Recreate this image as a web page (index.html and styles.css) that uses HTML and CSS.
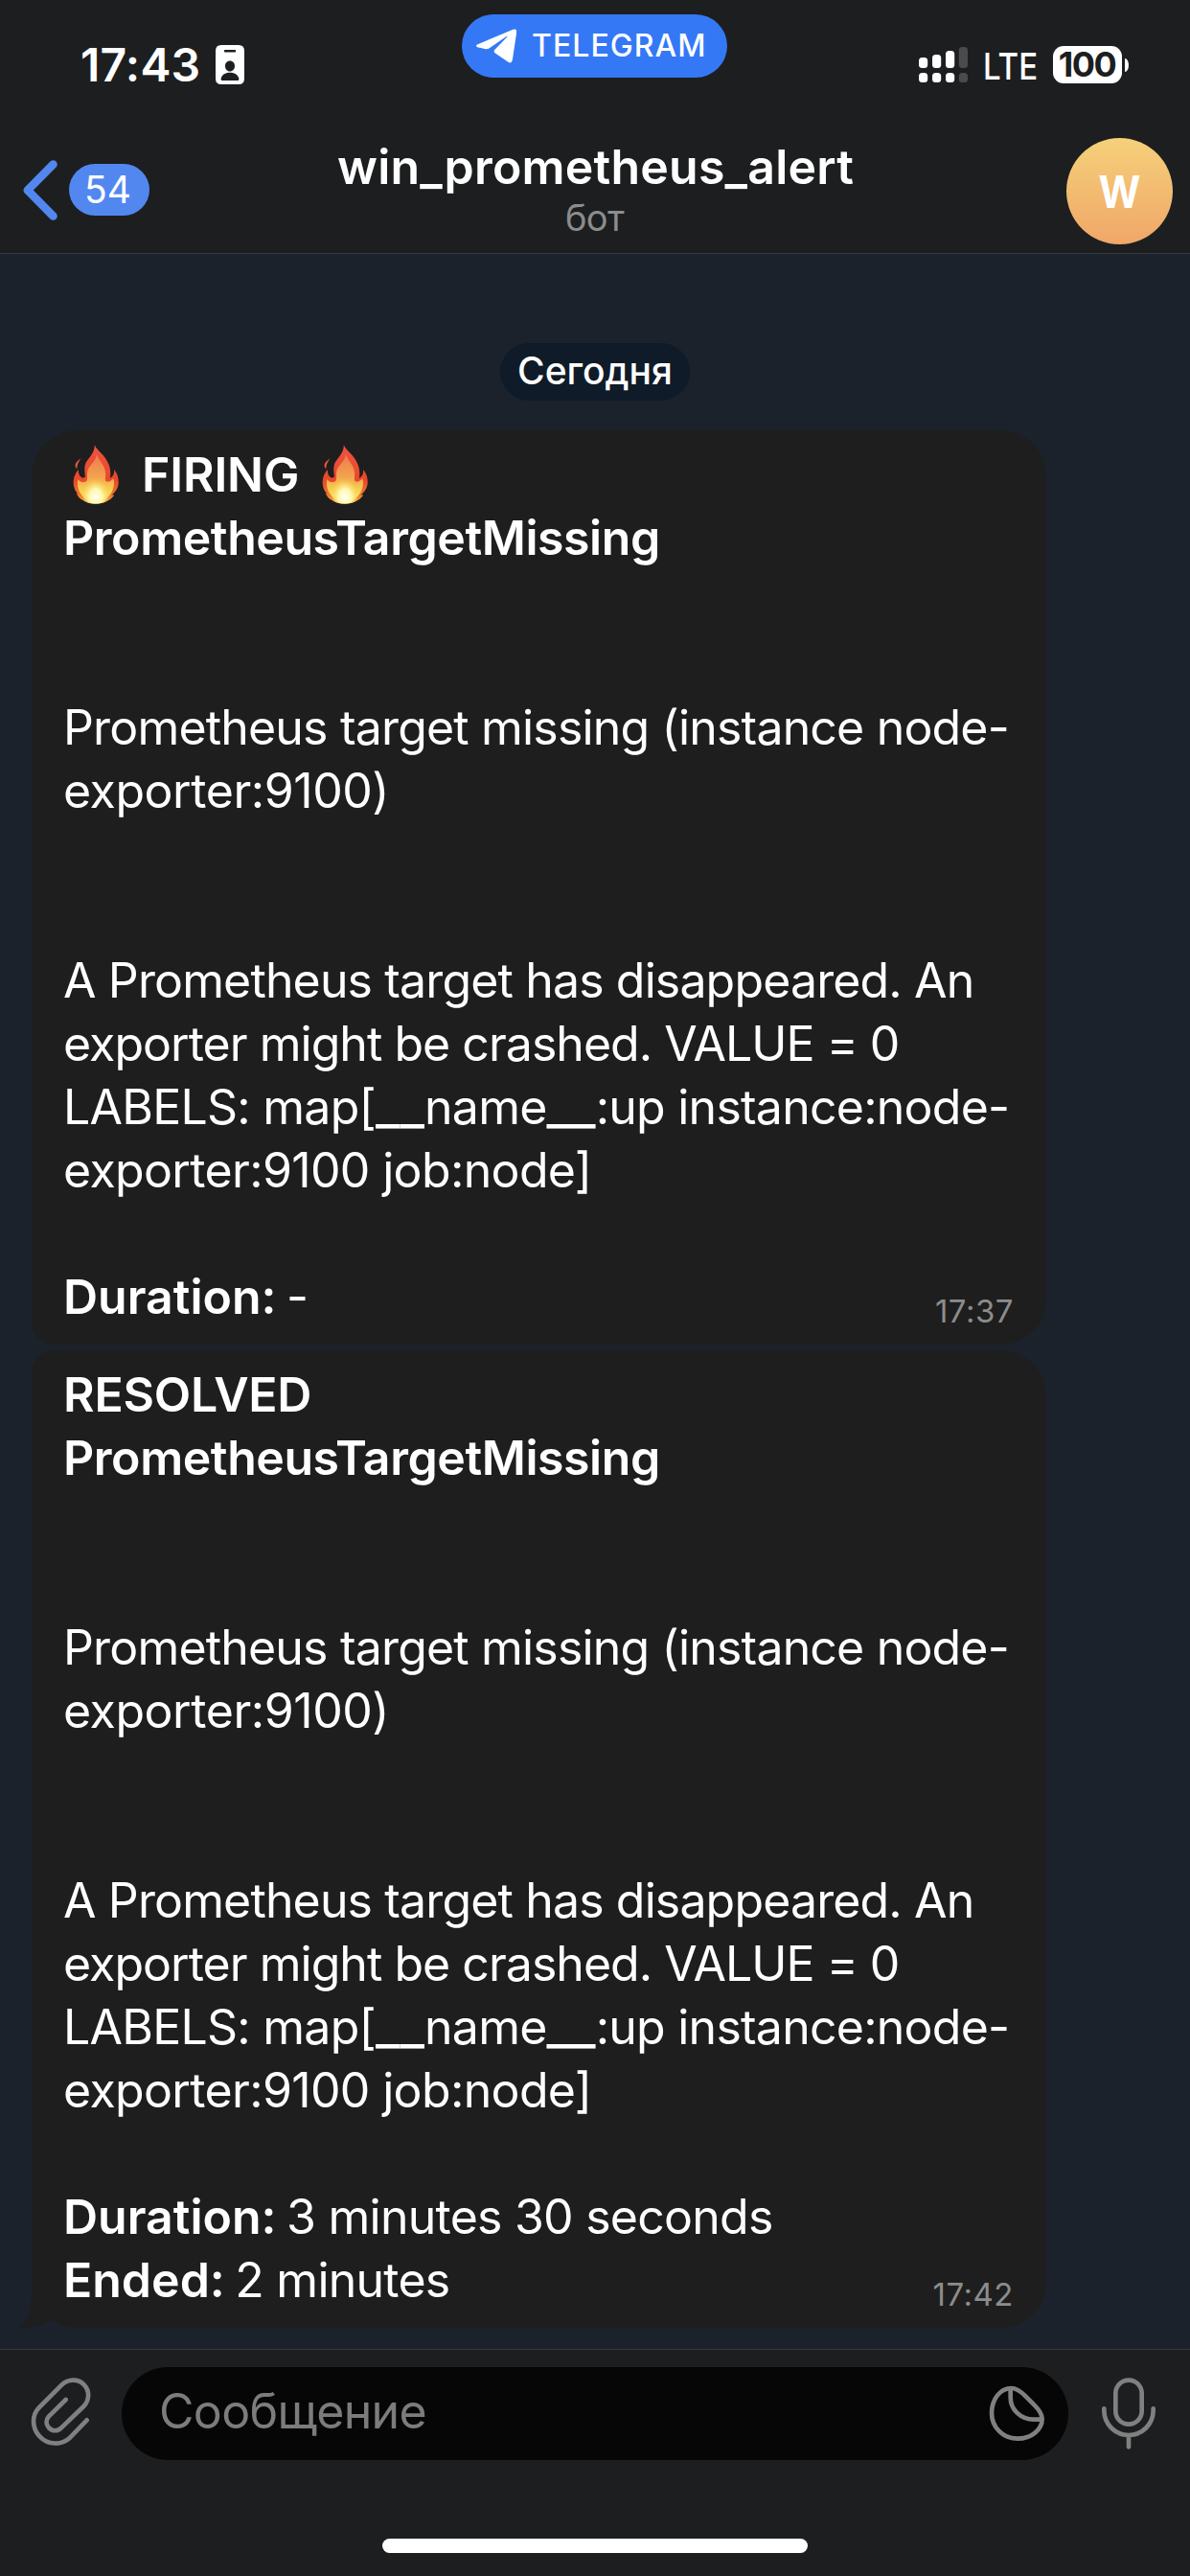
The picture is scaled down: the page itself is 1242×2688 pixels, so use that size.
FILE: index.html
```html
<!DOCTYPE html>
<html lang="ru">
<head>
<meta charset="utf-8">
<title>win_prometheus_alert</title>
<link rel="stylesheet" href="styles.css">
</head>
<body>
<svg class="defs" width="0" height="0" aria-hidden="true">
  <defs>
    <linearGradient id="flame-outer" x1="0" y1="0" x2="0" y2="1">
      <stop offset="0" stop-color="#ee5340"/>
      <stop offset=".6" stop-color="#e9472a"/>
      <stop offset=".85" stop-color="#f0762c"/>
      <stop offset="1" stop-color="#f6b440"/>
    </linearGradient>
    <linearGradient id="flame-inner" x1="0" y1="0" x2="0" y2="1">
      <stop offset="0" stop-color="#ee7a50"/>
      <stop offset=".45" stop-color="#f2a04e"/>
      <stop offset=".75" stop-color="#f8cf52"/>
      <stop offset="1" stop-color="#fbe46a"/>
    </linearGradient>
    <radialGradient id="flame-core" cx=".5" cy=".68" r=".5">
      <stop offset="0" stop-color="#fffff0"/>
      <stop offset=".45" stop-color="#fff9b4"/>
      <stop offset="1" stop-color="#fbdc5a" stop-opacity="0"/>
    </radialGradient>
    <symbol id="flame" viewBox="49 42 145 186">
      <path fill="url(#flame-outer)" d="M118 42C124 60 152 72 164 108C168 122 169 134 166 147C175 143 181 134 179 120C190 132 194 148 193 164C192 178 184 190 172 200L179 199C177 208 160 219 146 224C130 229 110 229 96 224C80 218 66 210 60 194L67 198C55 188 50 172 51 156C52 142 58 130 67 120C66 134 70 142 80 146L88 143C88 132 84 120 88 104C93 86 118 72 118 42Z"/>
      <path fill="#ea5540" d="M74 83C72 92 62 100 62 118C56 114 55 106 59 99C63 93 70 90 74 83Z"/>
      <path fill="url(#flame-inner)" d="M124 70C130 92 150 104 152 130C153 146 148 156 156 158C164 160 172 154 177 148C184 172 172 196 158 208C142 228 100 228 84 208C70 194 60 176 65 150C70 158 80 162 90 158C98 152 92 138 96 122C100 106 124 94 124 70Z"/>
      <ellipse cx="121" cy="186" rx="44" ry="56" fill="url(#flame-core)" clip-path="url(#flame-clip)"/>
    </symbol>
    <clipPath id="flame-clip"><path d="M70 120H172V206C160 219 146 227 121 228C96 227 80 218 70 206Z"/></clipPath>
  </defs>
</svg>

<div class="screen">
  <header class="header">
    <div class="status">
      <div class="status-time">17:43</div>
      <svg class="status-id" viewBox="0 0 30 41">
        <path fill="#fff" fill-rule="evenodd" d="M6 0H24Q30 0 30 6V35Q30 41 24 41H6Q0 41 0 35V6Q0 0 6 0ZM10 5Q8.800 5 8.800 6.200Q8.800 7.500 10 7.500H20Q21.200 7.500 21.200 6.200Q21.200 5 20 5ZM15 16.500C12 16.500 10 18.800 10 22C10 25 12.200 27.500 15 27.500C17.800 27.500 20 25 20 22C20 18.800 18 16.500 15 16.500ZM15 28.800C10 28.800 6 31.500 5.600 35.500Q5.600 37 7 37H23Q24.400 37 24.400 35.500C24 31.500 20 28.800 15 28.800Z"/>
      </svg>
      <div class="app-pill">
        <svg class="plane" viewBox="0 0 42 36">
          <path fill="#fff" d="M1 16.500L38.500 .8Q42.600 -.5 42.200 3.600L37.800 32.800Q36.800 37 33 34.400L19.500 25.200Q17.800 23.800 19.200 22L32.600 8.300Q32.500 7.600 31.600 8L13.800 20.200Q11.500 21.600 9 21L1.200 19.200Q-1 18 1 16.500Z"/>
        </svg>
        <span>TELEGRAM</span>
      </div>
      <svg class="signal" viewBox="0 0 51 37">
        <g fill="#fff">
          <rect x="0" y="11" width="9.200" height="11" rx="3.500"/><rect x="14" y="8" width="9.200" height="14" rx="3.500"/><rect x="28" y="4" width="9.200" height="18" rx="3.500"/>
          <rect x="0" y="27" width="9.200" height="10" rx="3.500"/><rect x="14" y="27" width="9.200" height="10" rx="3.500"/><rect x="28" y="27" width="9.200" height="10" rx="3.500"/>
        </g>
        <g fill="#4b4b4d"><rect x="41.800" y="0" width="9.200" height="22" rx="3.500"/><rect x="41.800" y="27" width="9.200" height="10" rx="3.500"/></g>
      </svg>
      <div class="network"><span>LTE</span></div>
      <div class="battery">100</div>
      <div class="battery-cap"></div>
    </div>
    <nav class="nav">
      <div class="back">
        <svg class="chevron" viewBox="0 0 36 63"><path d="M31.500 4.500L4.800 31.500L31.500 58.500" fill="none" stroke="#5287ef" stroke-width="8.600" stroke-linecap="round" stroke-linejoin="round"/></svg>
        <span class="unread">54</span>
      </div>
      <div class="heading">
        <div class="title">win_prometheus_alert</div>
        <div class="subtitle">бот</div>
      </div>
      <div class="avatar"><span>W</span></div>
    </nav>
  </header>

  <main class="chat">
    <div class="date">Сегодня</div>

    <article class="bubble first">
      <div class="line firing"><svg class="flame"><use href="#flame"/></svg><b>FIRING</b><svg class="flame"><use href="#flame"/></svg></div>
      <div class="line"><b class="name">PrometheusTargetMissing</b></div>
      <div class="line"></div>
      <div class="line"></div>
      <div class="line t80">Prometheus target missing (instance node-</div>
      <div class="line t45">exporter:9100)</div>
      <div class="line"></div>
      <div class="line"></div>
      <div class="line t85">A Prometheus target has disappeared. An</div>
      <div class="line t95">exporter might be crashed. VALUE = 0</div>
      <div class="line t75">LABELS: map[<span class="rule">__</span>name<span class="rule">__</span>:up instance:node-</div>
      <div class="line t65">exporter:9100 job:node]</div>
      <div class="line"></div>
      <div class="line last"><b>Duration:</b><span class="value">-</span><time>17:37</time></div>
    </article>

    <article class="bubble second">
      <div class="line"><b class="resolved">RESOLVED</b></div>
      <div class="line"><b class="name">PrometheusTargetMissing</b></div>
      <div class="line"></div>
      <div class="line"></div>
      <div class="line t80">Prometheus target missing (instance node-</div>
      <div class="line t45">exporter:9100)</div>
      <div class="line"></div>
      <div class="line"></div>
      <div class="line t85">A Prometheus target has disappeared. An</div>
      <div class="line t95">exporter might be crashed. VALUE = 0</div>
      <div class="line t75">LABELS: map[<span class="rule">__</span>name<span class="rule">__</span>:up instance:node-</div>
      <div class="line t65">exporter:9100 job:node]</div>
      <div class="line"></div>
      <div class="line last"><b>Duration:</b><span class="value">3 minutes 30 seconds</span></div>
      <div class="line last"><b>Ended:</b><span class="value">2 minutes</span><time>17:42</time></div>
      <svg class="tail" viewBox="0 0 34 48"><path fill="#1e1e1e" d="M13 0V14C13 31 8 41 0 48C12 48 25 46 33.500 39.300V0Z"/></svg>
    </article>
  </main>

  <footer class="composer">
    <div class="composer-row">
      <svg class="clip" viewBox="90 355 210 237"><path d="M272 497L219 552C193 576 150 576 125 549C100 523 98 483 122 458L193 387C213 367 245 367 263 386C281 405 281 433 262 454L192 521C181 533 163 532 153 521C143 510 143 496 153 485L206 433"/></svg>
      <div class="field">
        <span>Сообщение</span>
        <svg class="sticker" viewBox="870 386 177 177"><path d="M941 395C957 395 972 407 985 420L1012 447C1026 461 1037 476 1037 491C1037 525 1003 553 960 553C915 553 879 518 879 473C879 428 907 395 941 395ZM938 397V424C938 462 970 493 1010 493H1036"/></svg>
      </div>
      <svg class="mic" viewBox="1218 360 180 231"><rect x="1267" y="371" width="82" height="138" rx="41"/><path d="M1231 460V466A77 77 0 0 0 1385 466V460M1308 543V580"/></svg>
    </div>
    <div class="home"></div>
  </footer>
</div>
</body>
</html>
```
FILE: styles.css
```css
* { box-sizing: border-box; }

body {
  margin: 0;
  background: #1d1e1f;
  color: #fff;
  font-family: Inter, "Liberation Sans", sans-serif;
}

svg { display: block; flex: none; }
.defs { position: absolute; }

.screen {
  width: 1242px;
  height: 2688px;
  display: flex;
  flex-direction: column;
  overflow: hidden;
}

/* Status bar and navigation */
.header {
  height: 265px;
  flex: none;
  background: #1d1e1f;
  border-bottom: 1px solid #393c40;
}

.status {
  height: 135px;
  display: flex;
  align-items: center;
  padding: 0 64px 0 84px;
}

.status-time {
  width: 141px;
  font-size: 48px;
  line-height: 48px;
  font-weight: 600;
  letter-spacing: .25px;
}

.status-id { width: 30px; height: 41px; }

.app-pill {
  width: 277px;
  height: 66px;
  margin: -39px 0 0 227px;
  padding-left: 15px;
  display: flex;
  align-items: center;
  gap: 16px;
  border-radius: 33px;
  background: #3478f6;
  font-size: 32px;
  line-height: 66px;
  font-weight: 500;
  letter-spacing: 1.05px;
}

.plane { width: 42px; height: 36px; }
.signal { width: 51px; height: 37px; margin-left: auto; }

.network {
  width: 73px;
  margin: 3px 0 0 16px;
  font-size: 38px;
  line-height: 46px;
  font-weight: 500;
}

.network span {
  display: inline-block;
  transform: scaleX(.87);
  transform-origin: 0 50%;
}

.battery {
  width: 72px;
  height: 39px;
  border-radius: 11px;
  background: #fff;
  color: #1d1e1f;
  font-size: 36px;
  line-height: 39px;
  font-weight: 700;
  letter-spacing: -1.5px;
  text-indent: -1px;
  text-align: center;
}

.battery-cap {
  width: 4px;
  height: 14px;
  margin-left: 3px;
  border-radius: 0 4px 4px 0 / 0 7px 7px 0;
  background: #fff;
}

.nav {
  height: 129px;
  display: grid;
  grid-template-columns: 1fr auto 1fr;
  padding: 9px 18px 0 24px;
}

.back {
  display: flex;
  align-items: center;
  gap: 12px;
  height: 108px;
}

.chevron { width: 36px; height: 63px; }

.unread {
  width: 84px;
  height: 54px;
  padding-left: 16px;
  border-radius: 27px;
  background: #5287ef;
  font-size: 39px;
  line-height: 54px;
}

.heading { text-align: center; margin-left: -5px; }

.title {
  font-size: 50px;
  line-height: 60px;
  font-weight: 600;
  letter-spacing: .2px;
}

.subtitle {
  margin-left: -2px;
  color: #8b8c8d;
  font-size: 38px;
  line-height: 46px;
  letter-spacing: -.6px;
}

.avatar {
  width: 111px;
  height: 111px;
  justify-self: end;
  border-radius: 50%;
  background: linear-gradient(#f5d07a, #f0a768);
  font-size: 47px;
  line-height: 111px;
  font-weight: 700;
  text-align: center;
}

.avatar span { display: inline-block; transform: scaleX(.9); }

/* Conversation */
.chat {
  height: 2186px;
  flex: none;
  padding: 93px 0 0 33px;
  background: #1b222b;
  display: flex;
  flex-direction: column;
  align-items: flex-start;
}

.date {
  width: 198px;
  height: 60px;
  margin: 0 0 31px 489px;
  border-radius: 30px;
  background: #0f1b28;
  font-size: 39px;
  line-height: 58px;
  font-weight: 500;
  text-align: center;
}

.bubble {
  position: relative;
  width: 1059px;
  padding: 13px 34px 17px 33px;
  background: #1e1e1e;
  border-radius: 48px;
  font-size: 50px;
}

.first { margin-bottom: 6px; border-bottom-left-radius: 24px; }
.second { border-top-left-radius: 24px; }

.line {
  height: 66px;
  line-height: 66px;
  white-space: nowrap;
}

.line b { font-weight: 600; }

.firing {
  display: flex;
  align-items: center;
  gap: 24px;
  padding-left: 10px;
  letter-spacing: -.15px;
}

.flame { width: 48px; height: 62px; }
.name { letter-spacing: -.44px; }
.resolved { letter-spacing: -.24px; }
.t45 { letter-spacing: -.45px; }
.t65 { letter-spacing: -.65px; }
.t75 { letter-spacing: -.76px; }
.t80 { letter-spacing: -.82px; }
.t85 { letter-spacing: -.86px; }
.t95 { letter-spacing: -.97px; }

/* Wide underscores in label names */
.rule { font-size: 56px; line-height: 0; letter-spacing: 0; }

.last { display: flex; }
.value { margin-left: 10.500px; letter-spacing: -.75px; }

time {
  margin: auto 0 -2px auto;
  color: #8c8c8c;
  font-size: 33px;
  line-height: 40px;
  letter-spacing: .5px;
}

.tail {
  position: absolute;
  left: -13px;
  bottom: 0;
  width: 34px;
  height: 48px;
}

/* Message input */
.composer {
  flex: 1;
  background: #1d1e1f;
  border-top: 1px solid #3a3a3c;
}

.composer-row {
  display: flex;
  align-items: flex-start;
  padding: 18px 32px 0 30px;
}

.composer svg {
  fill: none;
  stroke: #808080;
  stroke-width: 14;
  stroke-linecap: round;
  stroke-linejoin: round;
}

.clip { width: 70px; height: 79px; margin: 8px 27px 0 0; }

.field {
  width: 988px;
  height: 97px;
  display: flex;
  justify-content: space-between;
  padding: 0 24px 0 39px;
  border-radius: 48.500px;
  background: #060606;
  color: #7c7c7c;
  font-size: 50px;
  line-height: 93px;
  letter-spacing: -.65px;
}

.sticker { width: 59px; height: 59px; margin-top: 19px; }
.mic { width: 60px; height: 77px; margin: 10px 0 0 33px; }

.home {
  width: 444px;
  height: 15px;
  margin: 82px auto 0;
  border-radius: 7.500px;
  background: #fff;
}
```
